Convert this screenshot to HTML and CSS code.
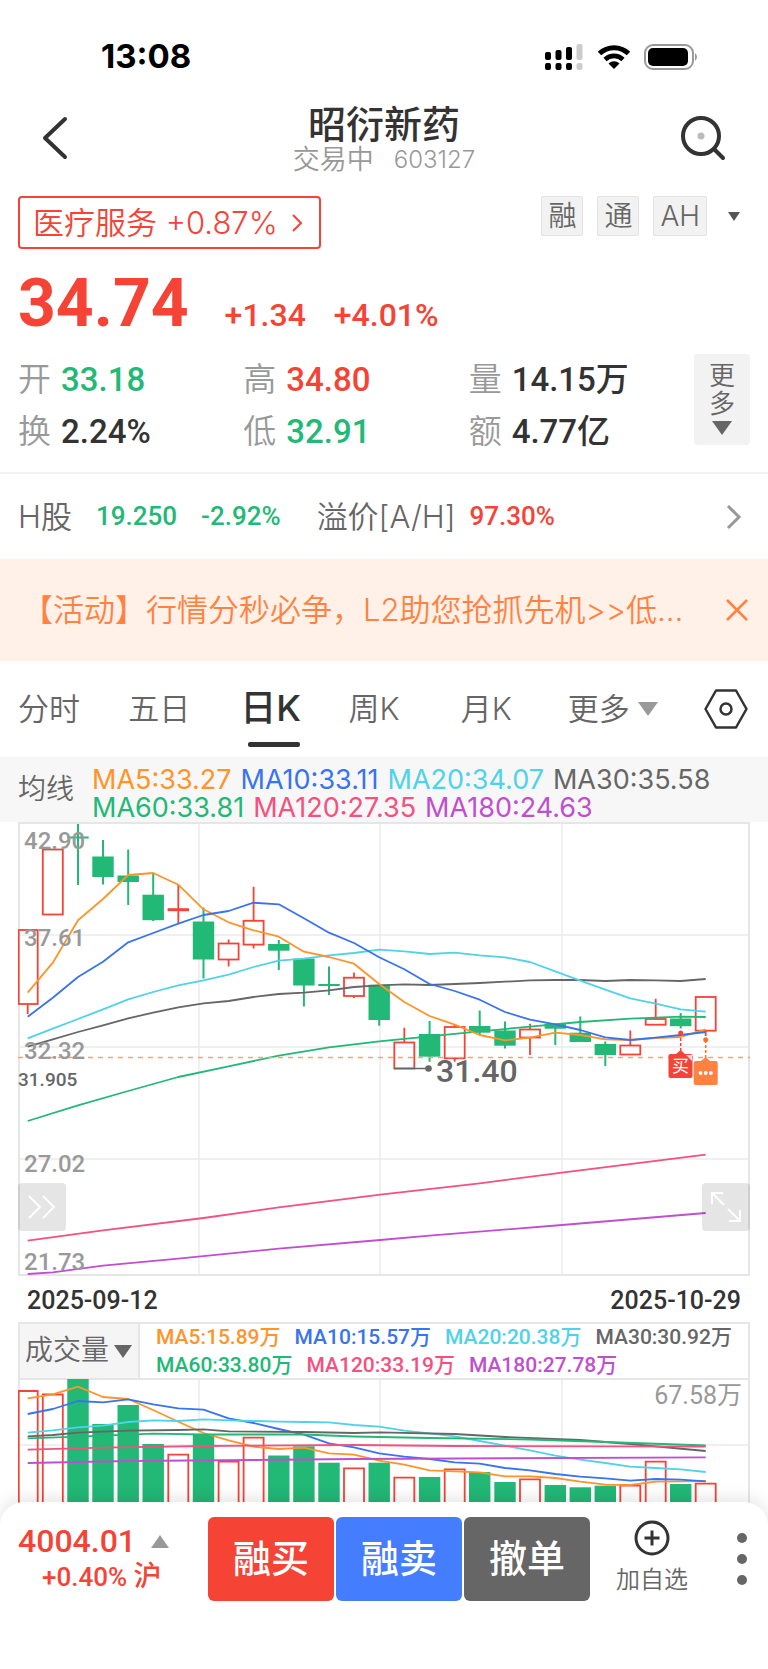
FILE: index.html
```html
<!DOCTYPE html>
<html lang="zh-CN">

<head>
  <meta charset="UTF-8">
  <meta name="viewport" content="width=device-width, initial-scale=1.0">
  <title>昭衍新药 603127</title>
  <link rel="stylesheet" href="styles.css">
</head>

<body>
  <div class="status-bar">
    <span class="status-time">13:08</span>
    <div class="status-icons">
      <svg width="39" height="27" viewBox="0 0 39 27">
        <rect x="0" y="8" width="6" height="8" rx="2" />
        <rect x="10.500" y="6" width="6" height="10" rx="2" />
        <rect x="21" y="3" width="6" height="13" rx="2" />
        <rect x="31.500" y="0" width="6" height="16" rx="2" fill="#ccc" />
        <rect x="0" y="19" width="6" height="7" rx="2" />
        <rect x="10.500" y="19" width="6" height="7" rx="2" />
        <rect x="21" y="19" width="6" height="7" rx="2" />
        <rect x="31.500" y="19" width="6" height="7" rx="2" fill="#ccc" />
      </svg>
      <svg width="34" height="26" viewBox="0 0 34 26">
        <path d="M2.500 9.500A21 21 0 0 1 31.500 9.500" fill="none" stroke="#000" stroke-width="5" />
        <path d="M8 15.500A13 13 0 0 1 26 15.500" fill="none" stroke="#000" stroke-width="4.600" />
        <path d="M17 25L11.500 19.500A8 8 0 0 1 22.500 19.500Z" />
      </svg>
      <svg width="55" height="26" viewBox="0 0 55 26">
        <rect x="1" y="1" width="48" height="24" rx="8" fill="none" stroke="#999" stroke-width="2" />
        <rect x="4" y="4" width="40" height="18" rx="5" />
        <path d="M51 9a5 5 0 0 1 0 8z" fill="#999" />
      </svg>
    </div>
  </div>

  <!-- 标题栏 -->
  <header class="nav-bar">
    <button class="icon-btn" aria-label="返回">
      <svg width="26" height="44" viewBox="0 0 26 44" fill="none" stroke="#333" stroke-width="4" stroke-linecap="round" stroke-linejoin="round">
        <path d="M23 3L3 22L23 41" />
      </svg>
    </button>
    <div class="nav-title">
      <h1>昭衍新药</h1>
      <p><span>交易中</span><span class="code">603127</span></p>
    </div>
    <button class="icon-btn" aria-label="搜索">
      <svg width="46" height="46" viewBox="0 0 46 46" fill="none" stroke="#333" stroke-width="4" stroke-linecap="round">
        <circle cx="21" cy="21" r="18" />
        <path d="M34 34L43 43" />
        <circle cx="21" cy="21" r="3.500" fill="#bbb" stroke="none" />
      </svg>
    </button>
  </header>

  <div class="sector-row">
    <a href="#" class="sector">医疗服务 +0.87%
      <svg width="12" height="18" viewBox="0 0 12 18" fill="none" stroke="currentColor" stroke-width="2">
        <path d="M2 1L10 9L2 17" />
      </svg>
    </a>
    <div class="badges">
      <span class="badge">融</span>
      <span class="badge">通</span>
      <span class="badge">AH</span>
      <button class="icon-btn badge-more" aria-label="展开">
        <svg width="12" height="9" viewBox="0 0 12 9"><path d="M0 0H12L6 9Z" fill="#555" /></svg>
      </button>
    </div>
  </div>

  <!-- 行情 -->
  <section class="quote">
    <div class="price-row up">
      <strong class="price">34.74</strong>
      <span class="change">+1.34</span>
      <span class="change">+4.01%</span>
    </div>
    <div class="stats-row">
      <dl class="stats">
        <div><dt>开</dt><dd class="down">33.18</dd></div>
        <div><dt>高</dt><dd class="up">34.80</dd></div>
        <div><dt>量</dt><dd>14.15万</dd></div>
        <div><dt>换</dt><dd>2.24%</dd></div>
        <div><dt>低</dt><dd class="down">32.91</dd></div>
        <div><dt>额</dt><dd>4.77亿</dd></div>
      </dl>
      <button class="stats-more">更<br>多
        <svg width="20" height="14" viewBox="0 0 20 14"><path d="M0 0H20L10 14Z" fill="#666" /></svg>
      </button>
    </div>
  </section>

  <a href="#" class="h-share">
    <span>H股</span>
    <span class="num down h-price">19.250</span>
    <span class="num down h-change">-2.92%</span>
    <span>溢价[A/H]</span>
    <span class="num up premium">97.30%</span>
    <svg width="16" height="26" viewBox="0 0 16 26" fill="none" stroke="#999" stroke-width="3">
      <path d="M2 2L13 13L2 24" />
    </svg>
  </a>

  <div class="notice">
    <a href="#">【活动】行情分秒必争，L2助您抢抓先机&gt;&gt;低…</a>
    <button class="icon-btn" aria-label="关闭">
      <svg width="22" height="22" viewBox="0 0 22 22" fill="none" stroke="#ff8240" stroke-width="2.500">
        <path d="M1 1L21 21M21 1L1 21" />
      </svg>
    </button>
  </div>

  <!-- 周期 -->
  <nav class="tabs">
    <button class="tab">分时</button>
    <button class="tab">五日</button>
    <button class="tab active">日K</button>
    <button class="tab">周K</button>
    <button class="tab">月K</button>
    <button class="tab">更多
      <svg width="20" height="14" viewBox="0 0 20 14"><path d="M0 0H20L10 14Z" fill="#999" /></svg>
    </button>
    <button class="icon-btn" aria-label="设置">
      <svg width="44" height="40" viewBox="0 0 44 40" fill="none" stroke="#333" stroke-width="2.500" stroke-linejoin="round">
        <path d="M12 1.500H32L42.500 20L32 38.500H12L1.500 20Z" />
        <circle cx="22" cy="20" r="5.500" />
      </svg>
    </button>
  </nav>

  <div class="ma-bar">
    <span class="ma-name">均线</span>
    <div class="ma-list">
      <span class="ma5">MA5:33.27</span>
      <span class="ma10">MA10:33.11</span>
      <span class="ma20">MA20:34.07</span>
      <span class="ma30">MA30:35.58</span>
      <span class="ma60">MA60:33.81</span>
      <span class="ma120">MA120:27.35</span>
      <span class="ma180">MA180:24.63</span>
    </div>
  </div>

  <!-- K线图 -->
  <div class="chart">
    <svg class="plot" viewBox="18 822 732 454">
      <path class="grid" d="M18 935H750M18 1047H750M18 1159H750M199 822V1276M380 822V1276M562 822V1276" />
      <path class="frame" d="M19 823H749V1275H19Z" />

      <path class="wick-green" d="M78 824V885M67.300 837.500H88.700M103 840V884.500M128.200 849.500V905M153.200 873.500V921M203.500 907.500V978.500M278.800 940V970M303.900 958.500V1006.500M329 966.500V995M318.300 985H339.700M379.200 985V1025.700M429.600 1021V1061.700M479.700 1010.500V1035M505 1021.500V1048.500M555.300 1024V1045M580.300 1016.500V1042M605.300 1041.500V1066M680.700 1013V1028.500" />
      <g class="fill-green">
        <rect x="92.300" y="856.500" width="21.400" height="20.500" />
        <rect x="117.500" y="875.500" width="21.400" height="6.500" />
        <rect x="142.500" y="894.700" width="21.400" height="25.500" />
        <rect x="192.800" y="921.500" width="21.400" height="38" />
        <rect x="268.100" y="944" width="21.400" height="6.700" />
        <rect x="293.200" y="958.500" width="21.400" height="27" />
        <rect x="368.500" y="984.700" width="21.400" height="35.300" />
        <rect x="418.900" y="1034" width="21.400" height="22.700" />
        <rect x="469" y="1026" width="21.400" height="6.700" />
        <rect x="494.300" y="1030.500" width="21.400" height="15.200" />
        <rect x="544.600" y="1023.700" width="21.400" height="5" />
        <rect x="569.600" y="1032.700" width="21.400" height="9.300" />
        <rect x="594.600" y="1044" width="21.400" height="11" />
        <rect x="670" y="1018.500" width="21.400" height="7.700" />
      </g>
      <g class="line-red">
        <path d="M27.700 1004V1014M178.300 885V923.500M228.600 939.500V943.500M228.600 959.500V966.500M253.600 886.700V920.800M253.600 944.600V948.500M354 972.500V977.700M354 996V998M404.300 1027.700V1042.500M454.700 1024V1027M454.700 1058.300V1061.700M530 1023.700V1029.500M530 1037.500V1055M630.300 1030.500V1045.500M655.700 998.700V1019M705.700 1030.700V1036" />
        <path d="M167.600 909.700H189" stroke-width="3" />
        <rect x="18.700" y="930" width="19" height="74" />
        <rect x="42.800" y="849.500" width="20" height="65" />
        <rect x="218.600" y="943.500" width="20" height="16" />
        <rect x="243.600" y="920.800" width="20" height="23.800" />
        <rect x="344" y="977.700" width="20" height="18.300" />
        <rect x="394.300" y="1042.500" width="20" height="26" />
        <rect x="444.700" y="1027" width="20" height="31.300" />
        <rect x="520" y="1029.500" width="20" height="8" />
        <rect x="620.300" y="1045.500" width="20" height="9" />
        <rect x="645.700" y="1019" width="20" height="5.700" />
        <rect x="695.700" y="997" width="20" height="33.700" />
      </g>

      <g class="lines">
        <polyline class="ma180" points="27.700,1274 52.800,1272.300 103,1265.700 178.300,1258.700 278.800,1248.700 380.300,1240 429.600,1235.700 562,1225 705.700,1213" />
        <polyline class="ma120" points="27.700,1240.700 103,1230.300 203.500,1218 278.800,1207.300 380.300,1194.700 479.700,1183.300 562,1172.700 705.700,1154.700" />
        <polyline class="ma60" points="27.700,1121 78,1105.300 128.200,1091 178.300,1077 228.600,1066.300 278.800,1055.700 329,1047.300 379.200,1041.300 429.600,1036.300 479.700,1031.300 530,1026.700 580.300,1022 630.300,1018.700 680.700,1016.700 705.700,1017" />
        <polyline class="ma30" points="27.700,1046.700 52.800,1039.300 78,1032 103,1025.300 128.200,1018.300 153.200,1012.700 178.300,1007.300 203.500,1003.300 228.600,1001 253.600,997 278.800,994 303.900,992.700 329,990.300 354,987 379.200,985.300 404.300,984.300 429.600,985 454.700,984 479.700,983 505,981.700 530,980.300 555.300,980 580.300,980 605.300,981 630.300,980 655.700,980.300 680.700,981 705.700,979" />
        <polyline class="ma20" points="27.700,1038.300 52.800,1028.700 78,1019 103,1009.300 128.200,999.300 153.200,992 178.300,985.300 203.500,980.300 228.600,974.700 253.600,967 278.800,960.700 303.900,958.700 329,955.300 354,953 379.200,949.700 404.300,951.300 429.600,954 454.700,952.700 479.700,955.300 505,957.300 530,962 555.300,971.300 580.300,980.700 605.300,989.700 630.300,998.300 655.700,1003.700 680.700,1009.300 705.700,1011.700" />
        <polyline class="ma5" points="27.700,992.700 52.800,962.700 78,920.300 103,899 128.200,875 153.200,873 178.300,884.700 203.500,909.300 228.600,922.300 253.600,930.300 278.800,936.700 303.900,951.700 329,957 354,963.700 379.200,984 404.300,1002 429.600,1016 454.700,1024.700 479.700,1035 505,1040.300 530,1037.700 555.300,1032.700 580.300,1035 605.300,1039.300 630.300,1040 655.700,1038 680.700,1037 705.700,1029.300" />
        <polyline class="ma10" points="27.700,1016.700 52.800,997.700 78,977 103,961.700 128.200,942.300 153.200,933 178.300,923.700 203.500,915 228.600,911 253.600,902.700 278.800,904.300 303.900,918.300 329,932.700 354,943 379.200,957.300 404.300,969.300 429.600,984 454.700,991 479.700,999.700 505,1012 530,1019.700 555.300,1024.300 580.300,1030 605.300,1037.300 630.300,1040 655.700,1037.700 680.700,1035 705.700,1032" />
      </g>

      <path d="M18 1057.500H750" stroke="#eba77b" stroke-width="1.500" stroke-dasharray="5 5" />

      <g class="axis">
        <text x="24" y="849">42.90</text>
        <text x="24" y="946">37.61</text>
        <text x="24" y="1059">32.32</text>
        <text x="24" y="1172">27.02</text>
        <text x="24" y="1270">21.73</text>
        <text class="cost" x="18" y="1086">31.905</text>
      </g>

      <!-- 最低价 -->
      <path d="M394 1068.500H428" stroke="#666" stroke-width="1.500" />
      <circle cx="428.500" cy="1068.500" r="3.300" fill="#666" />
      <text class="low" x="436" y="1082">31.40</text>

      <!-- 买卖点 -->
      <g stroke-dasharray="3 2" stroke-width="1.500">
        <path d="M680.700 1033V1054" stroke="#f54336" />
        <path d="M705.700 1040V1061" stroke="#ff6f20" />
      </g>
      <circle cx="680.700" cy="1033" r="2.500" fill="#f54336" />
      <circle cx="705.700" cy="1039.700" r="2.500" fill="#ff6f20" />
      <path d="M676 1054L680.700 1050L685 1054Z" fill="#f54336" />
      <rect x="668.500" y="1054" width="24" height="24" rx="2" fill="#f54336" />
      <path d="M686 1055H692V1061Z" fill="#fff" opacity="0.800" />
      <text class="mark" x="680.500" y="1072">买</text>
      <path d="M701 1061L705.700 1057L710 1061Z" fill="#ff8240" />
      <rect x="693.700" y="1061" width="24" height="24" rx="2" fill="#ff8240" />
      <circle cx="700.500" cy="1073" r="1.900" fill="#fff" />
      <circle cx="705.700" cy="1073" r="1.900" fill="#fff" />
      <circle cx="710.900" cy="1073" r="1.900" fill="#fff" />
    </svg>
    <button class="chart-btn chart-btn-left" aria-label="快进">
      <svg width="28" height="24" viewBox="0 0 28 24" fill="none" stroke="#fff" stroke-width="2">
        <path d="M1 1L12 12L1 23M15 1L26 12L15 23" />
      </svg>
    </button>
    <button class="chart-btn chart-btn-right" aria-label="全屏">
      <svg width="30" height="30" viewBox="0 0 30 30" fill="none" stroke="#fff" stroke-width="2">
        <path d="M1 12V1H12M1 1L13 13M18 29H29V18M29 29L17 17" />
      </svg>
    </button>
  </div>

  <div class="dates">
    <time>2025-09-12</time>
    <time>2025-10-29</time>
  </div>

  <!-- 成交量 -->
  <div class="volume">
    <div class="volume-head">
      <button class="indicator">成交量
        <svg width="18" height="13" viewBox="0 0 18 13"><path d="M0 0H18L9 13Z" fill="#666" /></svg>
      </button>
      <div class="ma-list vol-ma">
        <span class="ma5">MA5:15.89万</span>
        <span class="ma10">MA10:15.57万</span>
        <span class="ma20">MA20:20.38万</span>
        <span class="ma30">MA30:30.92万</span>
        <span class="ma60">MA60:33.80万</span>
        <span class="ma120">MA120:33.19万</span>
        <span class="ma180">MA180:27.78万</span>
      </div>
    </div>
    <svg class="plot" viewBox="18 1378 732 150">
      <path class="grid" d="M18 1445H750M199 1378V1528M380 1378V1528M562 1378V1528" />
      <path class="frame" d="M19 1528V1379H749V1528" />
      <g class="fill-green">
        <rect x="67.300" y="1379" width="21.400" height="150" />
        <rect x="92.300" y="1424" width="21.400" height="110" />
        <rect x="117.500" y="1405" width="21.400" height="130" />
        <rect x="142.500" y="1444" width="21.400" height="90" />
        <rect x="192.800" y="1434" width="21.400" height="99" />
        <rect x="268.100" y="1455.500" width="21.400" height="90" />
        <rect x="293.200" y="1446.300" width="21.400" height="90" />
        <rect x="318.300" y="1462.700" width="21.400" height="90" />
        <rect x="368.500" y="1462.700" width="21.400" height="90" />
        <rect x="418.900" y="1477" width="21.400" height="90" />
        <rect x="469" y="1472" width="21.400" height="90" />
        <rect x="494.300" y="1482" width="21.400" height="90" />
        <rect x="544.600" y="1485" width="21.400" height="90" />
        <rect x="569.600" y="1487.300" width="21.400" height="90" />
        <rect x="594.600" y="1485.700" width="21.400" height="90" />
        <rect x="670" y="1484" width="21.400" height="90" />
      </g>
      <path class="line-red" d="M18.700 1528V1391H37.700V1528M42.800 1528V1394.500H62.800V1528M168.300 1528V1454.700H188.300V1528M218.600 1528V1461.700H238.600V1528M243.600 1528V1437.700H263.600V1528M344 1528V1468.300H364V1528M394.300 1528V1477.700H414.300V1528M444.700 1528V1469.300H464.700V1528M520 1528V1479.300H540V1528M620.300 1528V1485.700H640.300V1528M645.700 1528V1461.700H665.700V1528M695.700 1528V1483.700H715.700V1528" />
      <g class="lines">
        <polyline class="ma5" points="27.700,1398.300 52.800,1394.300 78,1386.700 103,1397 128.200,1399 153.200,1410 178.300,1421.700 203.500,1433 228.600,1440.300 253.600,1446.700 278.800,1449 303.900,1447.700 329,1453.300 354,1454.700 379.200,1460.700 404.300,1464.700 429.600,1470.300 454.700,1471.300 479.700,1472.300 505,1476.300 530,1476.300 555.300,1478 580.300,1481.700 605.300,1484.700 630.300,1485 655.700,1481.700 680.700,1481.300 705.700,1481" />
        <polyline class="ma10" points="27.700,1414 52.800,1409 78,1401 103,1402.300 128.200,1399.300 153.200,1404.300 178.300,1408.300 203.500,1409.700 228.600,1418.300 253.600,1423 278.800,1429 303.900,1434.700 329,1443.300 354,1447.300 379.200,1453.300 404.300,1456.700 429.600,1459 454.700,1462.300 479.700,1463.700 505,1468 530,1470.300 555.300,1474 580.300,1476.700 605.300,1478.300 630.300,1480.700 655.700,1479 680.700,1479.700 705.700,1481.300" />
        <polyline class="ma20" points="27.700,1432.700 52.800,1430.300 78,1427.300 103,1425.700 128.200,1422 153.200,1420.300 178.300,1421 203.500,1419.300 228.600,1420.300 253.600,1421 278.800,1421.700 303.900,1422 329,1422.300 354,1425 379.200,1426.700 404.300,1430.700 429.600,1433.300 454.700,1436.300 479.700,1441 505,1445.700 530,1450.300 555.300,1455.700 580.300,1459.700 605.300,1463 630.300,1466.700 655.700,1468 680.700,1469.300 705.700,1472" />
        <polyline class="ma30" points="27.700,1436.300 52.800,1435 78,1432.700 128.200,1430.700 178.300,1430 203.500,1429.300 228.600,1431.300 303.900,1432 354,1433 380,1432.300 454.700,1434 505,1437 580.300,1440 630.300,1444 705.700,1451" />
        <polyline class="ma60" points="27.700,1438.300 78,1436.700 153.200,1433.700 203.500,1434.500 303.900,1434.500 354,1436.500 429.600,1438 530,1439.500 605.300,1442 705.700,1445.500" />
        <polyline class="ma120" points="27.700,1449.700 103,1447.700 203.500,1446 354,1445 454.700,1446 705.700,1446.700" />
        <polyline class="ma180" points="27.700,1463 128.200,1461 253.600,1460 354,1459 705.700,1457.300" />
      </g>
      <text class="vol-max" x="742" y="1404">67.58万</text>
    </svg>
  </div>

  <!-- 底部操作栏 -->
  <footer class="bottom-bar">
    <div class="index up">
      <div class="index-value">4004.01
        <svg width="18" height="13" viewBox="0 0 18 13"><path d="M0 13H18L9 0Z" fill="#999" /></svg>
      </div>
      <div class="index-change">+0.40% <b>沪</b></div>
    </div>
    <div class="trade">
      <button class="trade-btn buy">融买</button>
      <button class="trade-btn sell">融卖</button>
      <button class="trade-btn cancel">撤单</button>
    </div>
    <button class="add-btn">
      <svg width="36" height="36" viewBox="0 0 36 36" fill="none" stroke="#333" stroke-width="3">
        <circle cx="18" cy="18" r="16" />
        <path d="M18 10.500V25.500M10.500 18H25.500" />
      </svg>
      加自选
    </button>
    <button class="icon-btn dots" aria-label="更多">
      <svg width="10" height="52" viewBox="0 0 10 52" fill="#666">
        <circle cx="5" cy="5" r="5" />
        <circle cx="5" cy="26" r="5" />
        <circle cx="5" cy="47" r="5" />
      </svg>
    </button>
  </footer>
</body>

</html>
```
FILE: styles.css
```css
:root {
  --red: #f54336;
  --green: #22b876;
  --text: #333;
  --gray: #666;
  --light: #999;
  --line: #e6e6e6;
  --orange: #ff8240;
  --num: Roboto, "Noto Sans CJK SC", sans-serif;
}

* {
  box-sizing: border-box;
}

body {
  margin: 0;
  background: #fff;
  color: var(--text);
  font-family: Inter, "Noto Sans CJK SC", sans-serif;
  font-weight: 400;
  line-height: 1.2;
}

button {
  padding: 0;
  border: none;
  background: none;
  color: inherit;
  font: inherit;
  cursor: pointer;
}

a {
  color: inherit;
  text-decoration: none;
}

svg {
  display: block;
}

.up {
  color: var(--red);
}

.down {
  color: var(--green);
}

/* 状态栏 */
.status-bar {
  display: flex;
  justify-content: space-between;
  align-items: center;
  height: 98px;
  padding: 16px 69px 0 101px;
}

.status-time {
  font-size: 33px;
  font-weight: 700;
  color: #000;
}

.status-icons {
  display: flex;
  align-items: center;
  gap: 13px;
}

/* 标题栏 */
.nav-bar {
  display: flex;
  justify-content: space-between;
  align-items: center;
  height: 80px;
  padding: 0 42px;
}

.nav-bar .icon-btn {
  width: 46px;
}

.nav-title {
  text-align: center;
}

.nav-title h1 {
  margin: 0;
  font-size: 38px;
  font-weight: 500;
  line-height: 44px;
}

.nav-title p {
  display: flex;
  justify-content: center;
  align-items: center;
  gap: 20px;
  margin: 0;
  color: var(--light);
  font-size: 27px;
  font-weight: 350;
  line-height: 28px;
}

.nav-title .code {
  font-size: 24px;
}

/* 板块 */
.sector-row {
  display: flex;
  justify-content: space-between;
  align-items: flex-start;
  padding: 18px 28px 0 18px;
}

.sector {
  display: flex;
  align-items: center;
  gap: 13px;
  height: 53px;
  padding: 0 16px 0 13px;
  border: 2px solid var(--red);
  border-radius: 4px;
  color: var(--red);
  font-size: 31px;
  font-weight: 350;
}

.badges {
  display: flex;
  align-items: center;
  gap: 14px;
}

.badge {
  height: 40px;
  padding: 0 6px;
  border: 1px solid #e2e2e2;
  border-radius: 2px;
  background: #f2f2f2;
  color: var(--gray);
  font-size: 28px;
  font-weight: 350;
  line-height: 39px;
}

.badge-more {
  margin-left: 7px;
}

/* 行情 */
.quote {
  padding: 12px 18px 14px;
  border-bottom: 2px solid #f2f2f2;
  font-family: var(--num);
}

.price-row {
  display: flex;
  align-items: baseline;
  height: 93px;
  line-height: 86px;
}

.price {
  margin-right: 36px;
  font-size: 66px;
  font-weight: 700;
}

.change {
  margin-right: 28px;
  font-size: 32px;
  font-weight: 500;
}

.stats-row {
  display: flex;
  align-items: flex-start;
}

.stats {
  flex: 1;
  display: grid;
  grid-template-columns: repeat(3, 1fr);
  margin: 0;
}

.stats div {
  display: flex;
  align-items: baseline;
  gap: 10px;
  height: 52px;
  line-height: 52px;
}

.stats dt {
  color: var(--light);
  font-size: 33px;
  font-weight: 350;
}

.stats dd {
  margin: 0;
  font-size: 33px;
  font-weight: 500;
}

.stats-more {
  display: flex;
  flex-direction: column;
  align-items: center;
  width: 56px;
  padding: 8px 0 10px;
  border-radius: 4px;
  background: #f2f2f2;
  color: var(--gray);
  font-size: 26px;
  font-weight: 350;
  line-height: 28px;
}

.stats-more svg {
  margin-top: 3px;
}

.h-share {
  display: flex;
  align-items: center;
  height: 85px;
  padding: 0 26px 0 18px;
  color: var(--gray);
  font-size: 31px;
  font-weight: 350;
}

.h-share .num {
  font-family: var(--num);
  font-size: 26px;
  font-weight: 500;
}

.h-share .up {
  color: var(--red);
}

.h-share .down {
  color: var(--green);
}

.h-price {
  margin: 0 24px;
}

.h-change {
  margin-right: 36px;
}

.premium {
  margin: 0 auto 0 14px;
}

/* 公告 */
.notice {
  display: flex;
  align-items: center;
  gap: 32px;
  height: 102px;
  padding: 0 20px 0 22px;
  background: #fff0e8;
  color: var(--orange);
  font-size: 31px;
  font-weight: 350;
}

.notice a {
  flex: 1;
  overflow: hidden;
  text-overflow: ellipsis;
  white-space: nowrap;
}

/* 周期 */
.tabs {
  display: grid;
  grid-template-columns: 110fr 112fr 108fr 112fr 107fr 136fr 44px;
  align-items: center;
  height: 96px;
  padding: 0 20px 0 18px;
}

.tab {
  display: flex;
  align-items: center;
  gap: 8px;
  position: relative;
  height: 96px;
  color: var(--gray);
  font-size: 31px;
  font-weight: 350;
}

.tab.active {
  color: var(--text);
  font-size: 36px;
  font-weight: 500;
}

.tab.active::after {
  content: "";
  position: absolute;
  bottom: 10px;
  left: 8px;
  width: 52px;
  height: 5px;
  border-radius: 2px;
  background: var(--text);
}

/* 均线 */
.ma-bar {
  display: flex;
  align-items: center;
  gap: 18px;
  height: 65px;
  padding: 0 18px;
  background: #f7f7f7;
}

.ma-name {
  flex: none;
  color: var(--gray);
  font-size: 28px;
  font-weight: 350;
}

.ma-list {
  display: flex;
  flex-wrap: wrap;
  column-gap: 9px;
  font-size: 27px;
  line-height: 28px;
}

.ma-bar .ma-list {
  padding-top: 9px;
}

.ma5 {
  color: #ff9429;
  stroke: #ff9429;
}

.ma10 {
  color: #3873f0;
  stroke: #3873f0;
}

.ma20 {
  color: #4fd2ea;
  stroke: #4fd2ea;
}

.ma30 {
  color: #666;
  stroke: #666;
}

.ma60 {
  color: #22b876;
  stroke: #22b876;
}

.ma120 {
  color: #f5507f;
  stroke: #f5507f;
}

.ma180 {
  color: #c04fcf;
  stroke: #c04fcf;
}

/* 图表 */
.chart {
  position: relative;
  margin: 0 18px;
}

.plot {
  width: 100%;
  font-family: var(--num);
}

.grid {
  fill: none;
  stroke: #ebebeb;
  stroke-width: 1.5;
}

.frame {
  fill: none;
  stroke: var(--line);
  stroke-width: 2;
}

.wick-green {
  fill: none;
  stroke: var(--green);
  stroke-width: 2;
}

.fill-green {
  fill: var(--green);
}

.line-red {
  fill: none;
  stroke: var(--red);
  stroke-width: 1.8;
}

.lines {
  fill: none;
  stroke-width: 1.8;
  stroke-linejoin: round;
}

.axis text {
  fill: var(--light);
  font-size: 24px;
  font-weight: 500;
}

.axis .cost {
  fill: var(--gray);
  font-size: 19px;
}

.low {
  fill: var(--gray);
  font-size: 32px;
  font-weight: 500;
}

.mark {
  fill: #fff;
  font-size: 17px;
  text-anchor: middle;
}

.vol-max {
  fill: var(--light);
  font-size: 25px;
  text-anchor: end;
}

.chart-btn {
  position: absolute;
  bottom: 45px;
  display: flex;
  justify-content: center;
  align-items: center;
  width: 48px;
  height: 48px;
  border-radius: 4px;
  background: rgba(0, 0, 0, 0.1);
}

.chart-btn-left {
  left: 0;
}

.chart-btn-right {
  right: 0;
}

.dates {
  display: flex;
  justify-content: space-between;
  align-items: center;
  height: 46px;
  padding: 3px 27px 0;
  font-family: var(--num);
  font-size: 25px;
  font-weight: 500;
}

/* 成交量 */
.volume {
  margin: 0 18px;
}

.volume-head {
  display: flex;
  height: 56px;
  border: 2px solid var(--line);
  border-bottom: none;
}

.indicator {
  display: flex;
  align-items: center;
  gap: 5px;
  padding: 0 6px 0 5px;
  border-right: 2px solid var(--line);
  background: #f5f5f5;
  color: var(--gray);
  font-size: 28px;
  font-weight: 350;
}

.vol-ma {
  flex: 1;
  align-content: center;
  column-gap: 14px;
  padding-left: 16px;
  font-family: var(--num);
  font-size: 21px;
  font-weight: 500;
}

/* 底部操作栏 */
.bottom-bar {
  position: relative;
  display: flex;
  align-items: flex-start;
  height: 166px;
  margin-top: -26px;
  padding: 15px 21px 0 18px;
  border-radius: 24px 24px 0 0;
  background: #fff;
  box-shadow: 0 -4px 16px rgba(0, 0, 0, 0.1);
}

.index {
  width: 190px;
  padding-top: 5px;
  font-family: var(--num);
  font-weight: 500;
}

.index-value {
  display: flex;
  align-items: center;
  gap: 15px;
  font-size: 32px;
  line-height: 38px;
}

.index-change {
  padding-left: 24px;
  font-size: 26px;
  line-height: 34px;
}

.index-change b {
  font-size: 28px;
  font-weight: 500;
}

.trade {
  flex: 1;
  display: flex;
  gap: 2px;
}

.trade-btn {
  flex: 1;
  height: 84px;
  border-radius: 6px;
  color: #fff;
  font-size: 38px;
  font-weight: 500;
}

.buy {
  background: var(--red);
}

.sell {
  background: #447eff;
}

.cancel {
  background: #666;
}

.add-btn {
  display: flex;
  flex-direction: column;
  align-items: center;
  gap: 8px;
  width: 124px;
  padding-top: 3px;
  color: var(--gray);
  font-size: 24px;
  font-weight: 350;
  line-height: 32px;
}

.dots {
  width: 33px;
  padding: 16px 0 0 23px;
}
```
